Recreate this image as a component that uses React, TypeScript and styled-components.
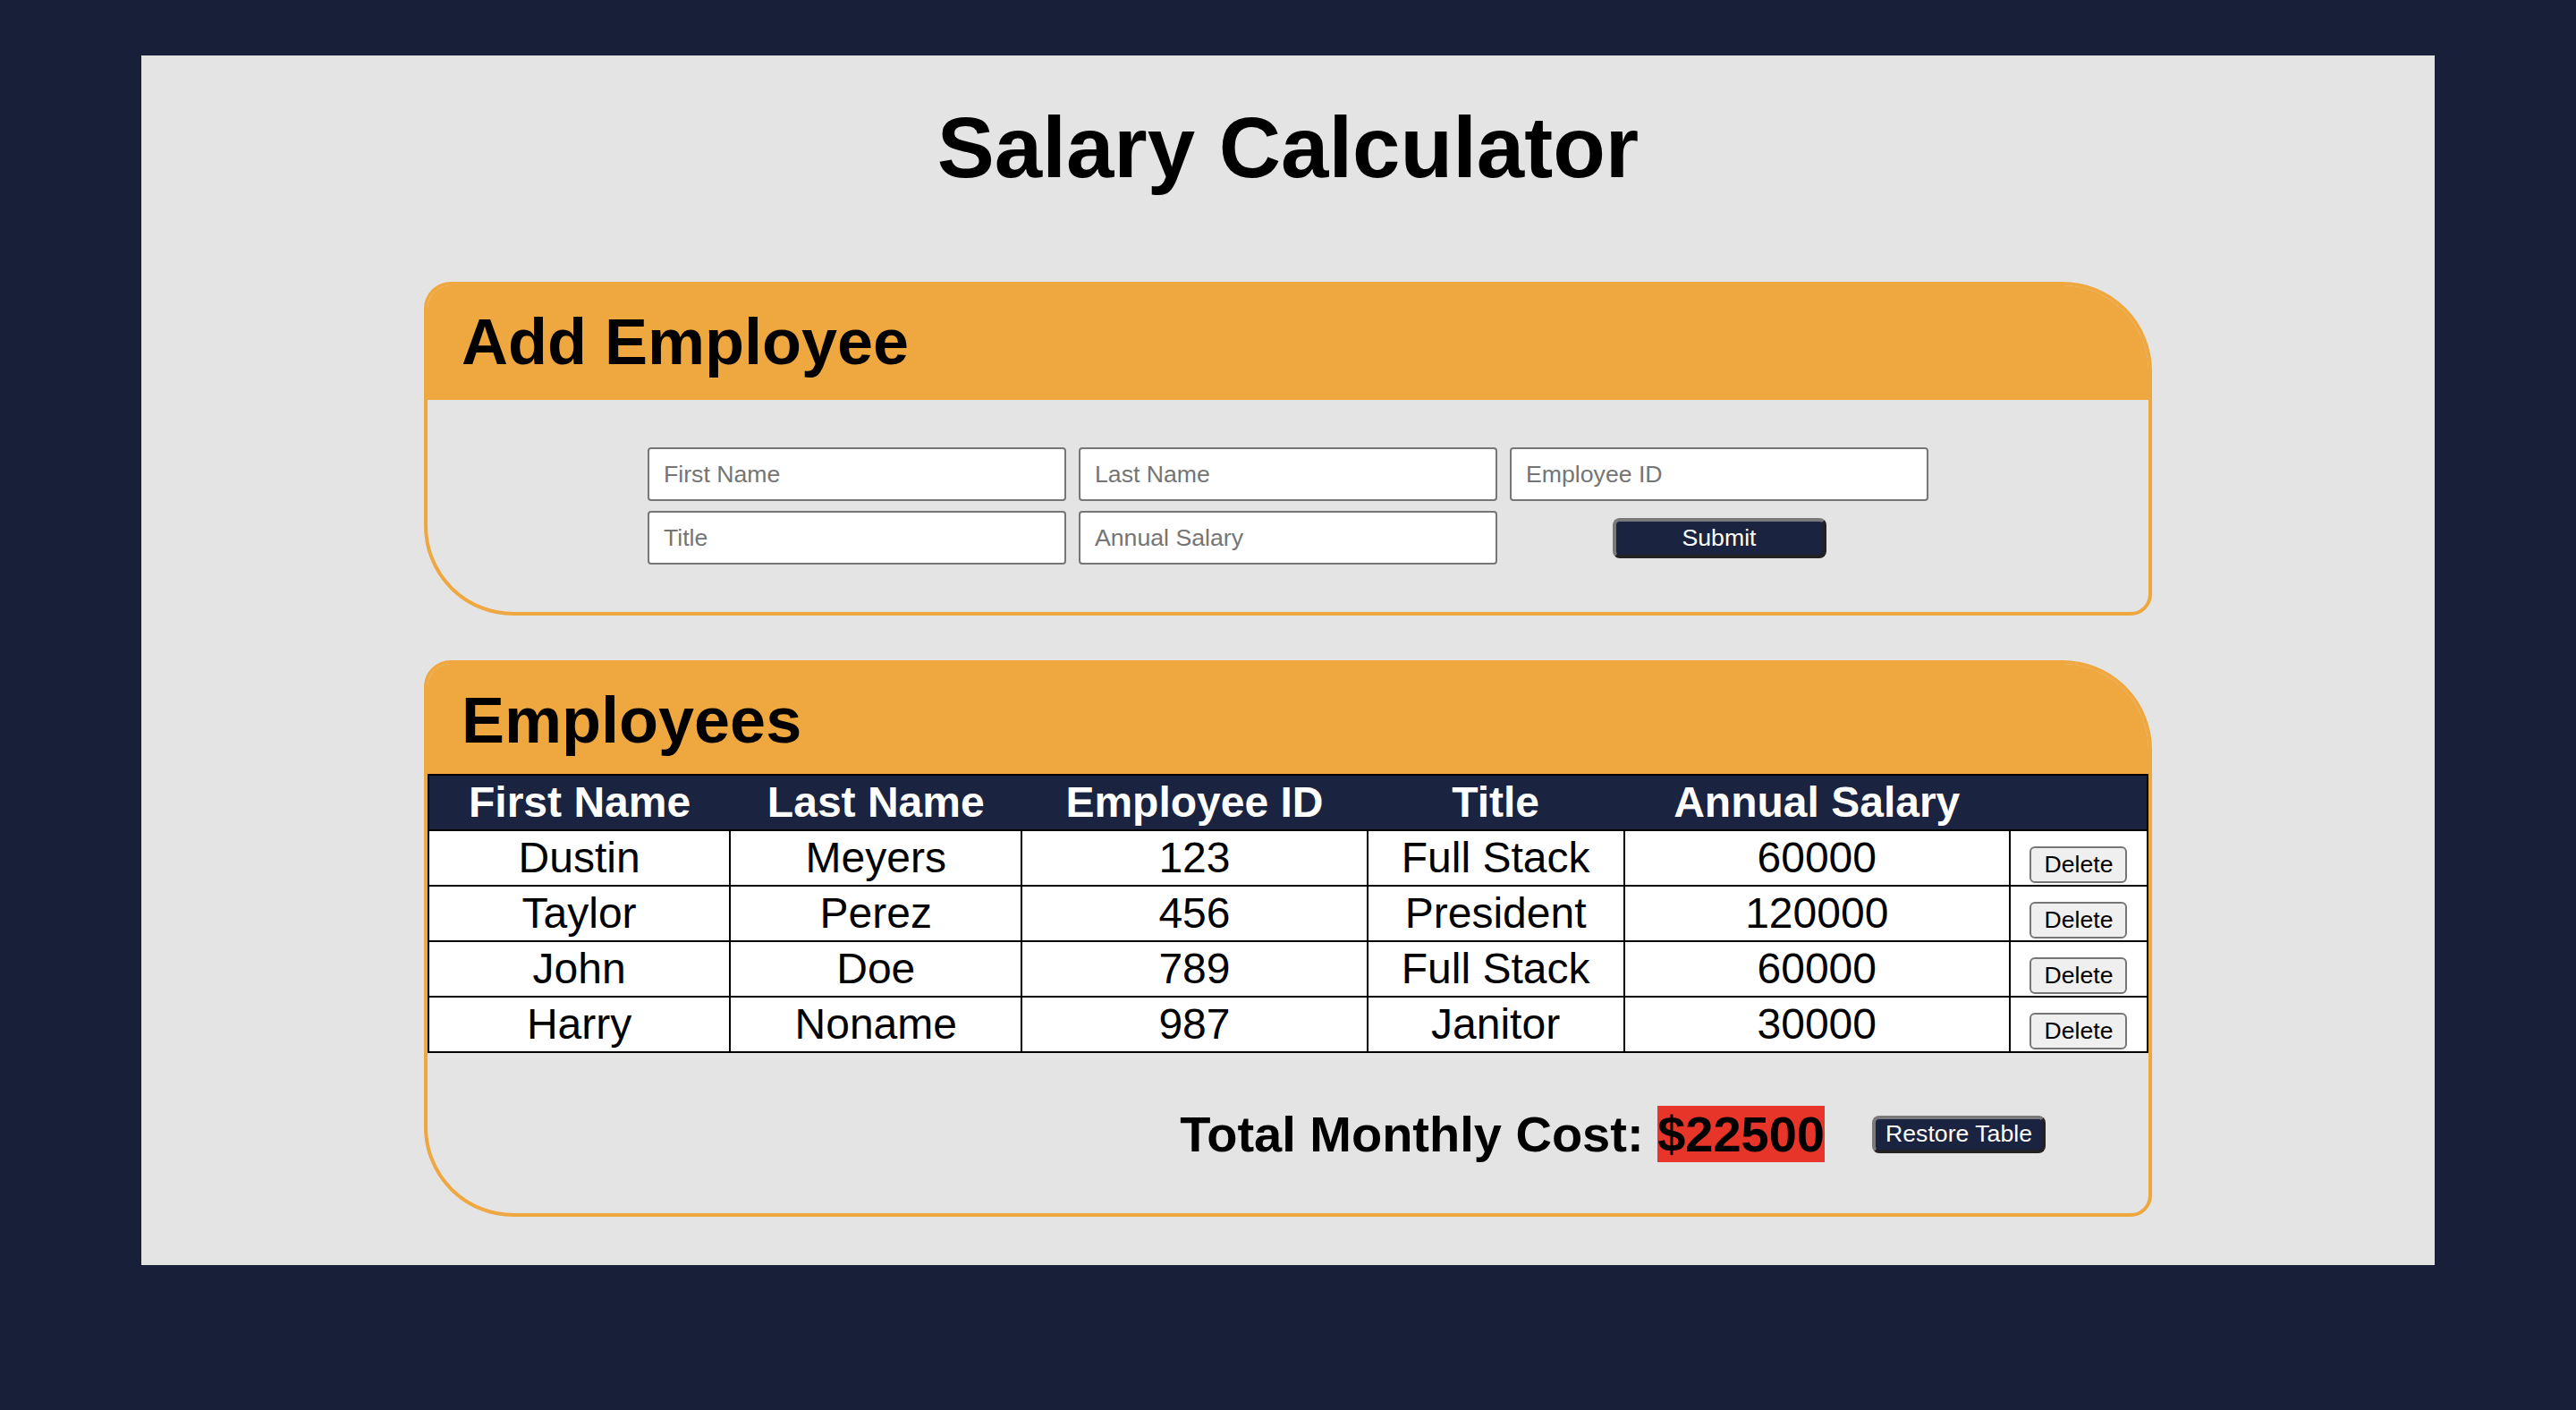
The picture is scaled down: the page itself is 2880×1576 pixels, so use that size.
import React from 'react';
import styled, { createGlobalStyle } from 'styled-components';

const ORANGE = '#efa73f';
const NAVY = '#1a2340';

const GlobalStyle = createGlobalStyle`
  html, body {
    margin: 0;
    padding: 0;
    background: #182039;
  }
  * {
    box-sizing: border-box;
  }
`;

const Page = styled.div`
  min-height: 1576px;
  padding: 62px 158px;
  font-family: 'Liberation Sans', Arial, sans-serif;
`;

const Panel = styled.main`
  background: #e4e4e4;
  display: flex;
  flex-direction: column;
  align-items: center;
  padding: 48px 0 54px;
`;

const Title = styled.h1`
  margin: 0 0 95px;
  font-size: 96px;
  font-weight: 700;
  line-height: normal;
  color: #000;
`;

const Card = styled.section<{ $gap?: number }>`
  width: 1932px;
  border: 4px solid ${ORANGE};
  border-radius: 30px 100px 24px 100px;
  overflow: hidden;
  margin-bottom: ${({ $gap }) => $gap ?? 0}px;
`;

const CardHeader = styled.div<{ $bottom: number }>`
  background: ${ORANGE};
  padding: 22px 38px ${({ $bottom }) => $bottom}px;
`;

const CardTitle = styled.h2`
  margin: 0;
  font-size: 72px;
  font-weight: 700;
  line-height: normal;
  color: #000;
`;

const FormGrid = styled.form`
  display: grid;
  grid-template-columns: repeat(3, 468px);
  grid-auto-rows: 60px;
  column-gap: 14px;
  row-gap: 11px;
  justify-content: center;
  padding: 53px 0;
`;

const TextInput = styled.input`
  width: 100%;
  height: 60px;
  border: 2px solid #767676;
  border-radius: 4px;
  background: #fff;
  padding: 0 16px;
  font-family: 'Liberation Sans', Arial, sans-serif;
  font-size: 26.67px;
  color: #000;
  outline: none;

  &::placeholder {
    color: #757575;
  }
`;

const DarkButton = styled.button<{ $w: number; $h: number }>`
  width: ${({ $w }) => $w}px;
  height: ${({ $h }) => $h}px;
  background: ${NAVY};
  color: #fff;
  border-width: 4px;
  border-style: solid;
  border-color: #7a7a7a #222 #222 #7a7a7a;
  border-radius: 8px;
  font-family: 'Liberation Sans', Arial, sans-serif;
  font-size: 26.67px;
  padding: 0;
  cursor: pointer;
`;

const SubmitCell = styled.div`
  display: flex;
  align-items: center;
  justify-content: center;
`;

const Table = styled.table`
  width: 100%;
  border-collapse: collapse;
  table-layout: fixed;
  border: 2px solid #000;
  font-size: 48px;
`;

const HeadCell = styled.th`
  background: ${NAVY};
  color: #fff;
  font-weight: 700;
  text-align: center;
  line-height: 60px;
  padding: 0;
  border: 2px solid #000;
  border-left: none;
  border-right: none;
`;

const Cell = styled.td`
  background: #fff;
  color: #000;
  text-align: center;
  line-height: 58px;
  padding: 1px 0;
  border: 2px solid #000;
`;

const DeleteButton = styled.button`
  width: 109px;
  height: 41px;
  margin-top: 8px;
  vertical-align: middle;
  background: #efefef;
  border: 2px solid #767676;
  border-radius: 6px;
  font-family: 'Liberation Sans', Arial, sans-serif;
  font-size: 26.67px;
  color: #000;
  padding: 0;
  cursor: pointer;
`;

const Footer = styled.div`
  display: flex;
  align-items: center;
  justify-content: flex-end;
  gap: 53px;
  padding: 58px 115px 56px 0;
`;

const TotalText = styled.div`
  font-size: 56px;
  font-weight: 700;
  line-height: normal;
  color: #000;
  white-space: pre;
`;

const TotalAmount = styled.span`
  background: #e7352a;
`;

const columns = [
  { label: 'First Name', width: 337 },
  { label: 'Last Name', width: 326 },
  { label: 'Employee ID', width: 386 },
  { label: 'Title', width: 287 },
  { label: 'Annual Salary', width: 431 },
  { label: '', width: 154 },
];

const employees = [
  { first: 'Dustin', last: 'Meyers', id: '123', title: 'Full Stack', salary: '60000' },
  { first: 'Taylor', last: 'Perez', id: '456', title: 'President', salary: '120000' },
  { first: 'John', last: 'Doe', id: '789', title: 'Full Stack', salary: '60000' },
  { first: 'Harry', last: 'Noname', id: '987', title: 'Janitor', salary: '30000' },
];

export default function App() {
  return (
    <>
      <GlobalStyle />
      <Page>
        <Panel>
          <Title>Salary Calculator</Title>

          <Card $gap={50}>
            <CardHeader $bottom={24}>
              <CardTitle>Add Employee</CardTitle>
            </CardHeader>
            <FormGrid onSubmit={(e) => e.preventDefault()}>
              <TextInput placeholder="First Name" />
              <TextInput placeholder="Last Name" />
              <TextInput placeholder="Employee ID" />
              <TextInput placeholder="Title" />
              <TextInput placeholder="Annual Salary" />
              <SubmitCell>
                <DarkButton type="submit" $w={239} $h={45}>
                  Submit
                </DarkButton>
              </SubmitCell>
            </FormGrid>
          </Card>

          <Card>
            <CardHeader $bottom={19}>
              <CardTitle>Employees</CardTitle>
            </CardHeader>
            <Table>
              <colgroup>
                {columns.map((c, i) => (
                  <col key={i} style={{ width: c.width }} />
                ))}
              </colgroup>
              <thead>
                <tr>
                  {columns.map((c, i) => (
                    <HeadCell key={i}>{c.label}</HeadCell>
                  ))}
                </tr>
              </thead>
              <tbody>
                {employees.map((emp) => (
                  <tr key={emp.id}>
                    <Cell>{emp.first}</Cell>
                    <Cell>{emp.last}</Cell>
                    <Cell>{emp.id}</Cell>
                    <Cell>{emp.title}</Cell>
                    <Cell>{emp.salary}</Cell>
                    <Cell>
                      <DeleteButton>Delete</DeleteButton>
                    </Cell>
                  </tr>
                ))}
              </tbody>
            </Table>
            <Footer>
              <TotalText>
                Total Monthly Cost: <TotalAmount>$22500</TotalAmount>
              </TotalText>
              <DarkButton $w={194} $h={42}>
                Restore Table
              </DarkButton>
            </Footer>
          </Card>
        </Panel>
      </Page>
    </>
  );
}
